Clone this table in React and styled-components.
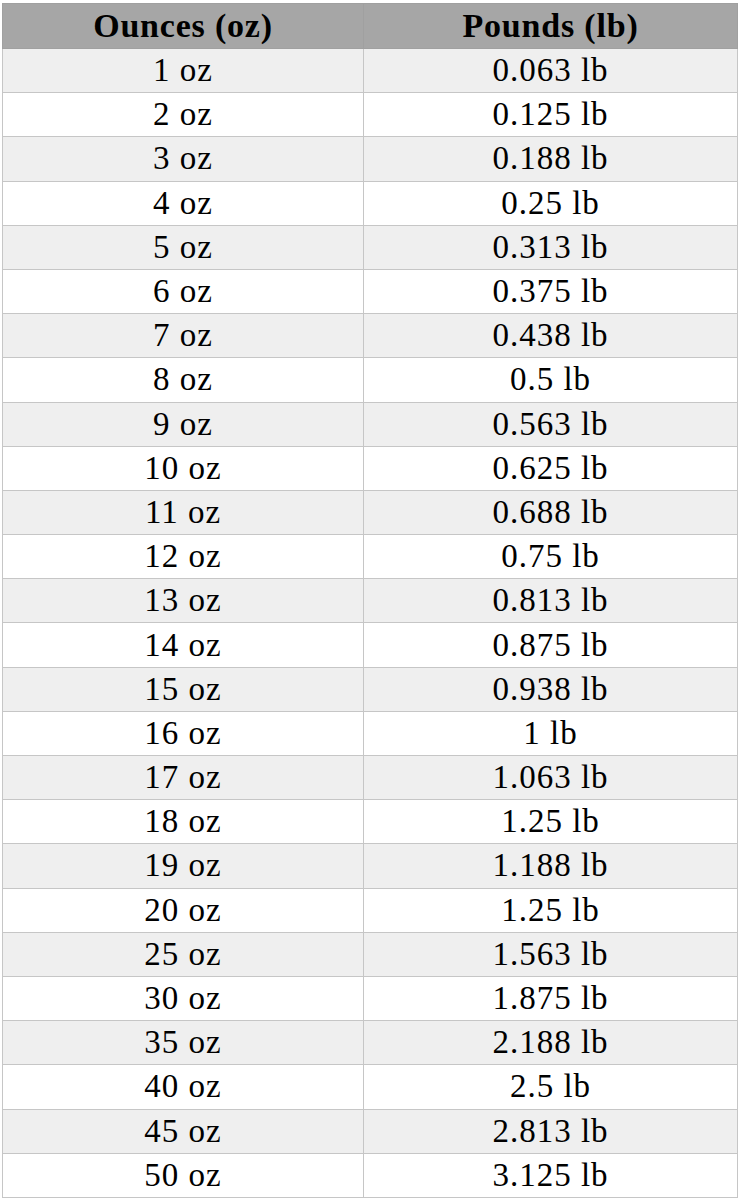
import React from 'react';
import styled, { createGlobalStyle } from 'styled-components';

const rows = [
  ['1 oz', '0.063 lb'],
  ['2 oz', '0.125 lb'],
  ['3 oz', '0.188 lb'],
  ['4 oz', '0.25 lb'],
  ['5 oz', '0.313 lb'],
  ['6 oz', '0.375 lb'],
  ['7 oz', '0.438 lb'],
  ['8 oz', '0.5 lb'],
  ['9 oz', '0.563 lb'],
  ['10 oz', '0.625 lb'],
  ['11 oz', '0.688 lb'],
  ['12 oz', '0.75 lb'],
  ['13 oz', '0.813 lb'],
  ['14 oz', '0.875 lb'],
  ['15 oz', '0.938 lb'],
  ['16 oz', '1 lb'],
  ['17 oz', '1.063 lb'],
  ['18 oz', '1.25 lb'],
  ['19 oz', '1.188 lb'],
  ['20 oz', '1.25 lb'],
  ['25 oz', '1.563 lb'],
  ['30 oz', '1.875 lb'],
  ['35 oz', '2.188 lb'],
  ['40 oz', '2.5 lb'],
  ['45 oz', '2.813 lb'],
  ['50 oz', '3.125 lb'],
];

const App = () => {
  return (
    <>
      <GlobalStyle />
      <Page>
        <Table>
          <thead>
            <tr>
              <HeadCell>Ounces (oz)</HeadCell>
              <HeadCell>Pounds (lb)</HeadCell>
            </tr>
          </thead>
          <tbody>
            {rows.map(([oz, lb], i) => (
              <Row key={oz + i} $shaded={i % 2 === 0}>
                <Cell>{oz}</Cell>
                <Cell>{lb}</Cell>
              </Row>
            ))}
          </tbody>
        </Table>
      </Page>
    </>
  );
};

export default App;

const GlobalStyle = createGlobalStyle`
  html, body {
    margin: 0;
    padding: 0;
    background: #ffffff;
  }
`;

const Page = styled.div`
  width: 743px;
  height: 1200px;
  padding: 3px 5px 0 2px;
  box-sizing: border-box;
  background: #ffffff;
`;

const Table = styled.table`
  width: 100%;
  border-collapse: collapse;
  table-layout: fixed;
  font-family: "Liberation Serif", "Times New Roman", serif;
  color: #000;
`;

const HeadCell = styled.th`
  height: 44px;
  padding: 0;
  background: #a6a6a6;
  border: 1px solid #a0a0a0;
  font-size: 34px;
  font-weight: 700;
  letter-spacing: 0.8px;
  line-height: 1;
  text-align: center;
  vertical-align: middle;
  &:first-child {
    width: 360px;
  }
`;

const Row = styled.tr`
  background: ${(p) => (p.$shaded ? '#efefef' : '#ffffff')};
`;

const Cell = styled.td`
  height: 43.2px;
  padding: 0;
  border: 1px solid #c6c6c6;
  font-size: 33px;
  letter-spacing: 1px;
  line-height: 1;
  text-align: center;
  vertical-align: middle;
  white-space: nowrap;
`;
